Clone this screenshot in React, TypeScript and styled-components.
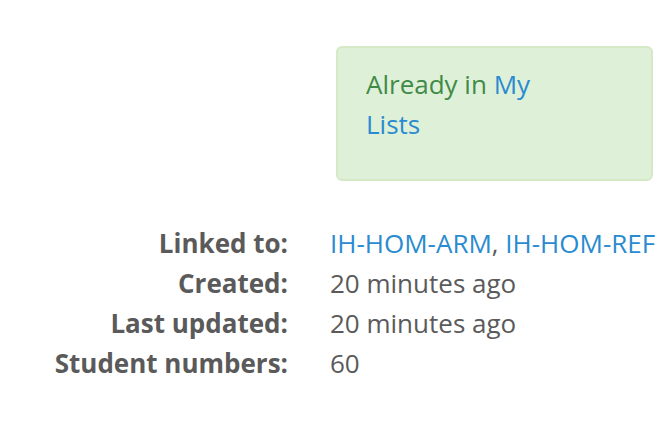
import styled, { createGlobalStyle } from 'styled-components';

const GlobalStyle = createGlobalStyle`
  html, body {
    margin: 0;
    padding: 0;
    background: #ffffff;
  }
  body {
    font-family: 'Open Sans', 'Noto Sans', sans-serif;
    font-size: 26px;
    color: #555555;
  }
`;

const details = [
  { label: 'Linked to:', links: ['IH-HOM-ARM', 'IH-HOM-REF'] },
  { label: 'Created:', value: '20 minutes ago' },
  { label: 'Last updated:', value: '20 minutes ago' },
  { label: 'Student numbers:', value: '60' },
];

const App = () => {
  return (
    <Styled.Page>
      <GlobalStyle />
      <Styled.AlertRow>
        <Styled.Alert>
          <Styled.AlertText>
            Already in <Styled.Link href="#">My Lists</Styled.Link>
          </Styled.AlertText>
        </Styled.Alert>
      </Styled.AlertRow>
      <Styled.Details>
        {details.map((d) => (
          <Styled.Row key={d.label}>
            <Styled.Term>{d.label}</Styled.Term>
            <Styled.Value>
              {d.links
                ? d.links.map((l, i) => (
                    <span key={l}>
                      {i > 0 && ', '}
                      <Styled.Link href="#">{l}</Styled.Link>
                    </span>
                  ))
                : d.value}
            </Styled.Value>
          </Styled.Row>
        ))}
      </Styled.Details>
    </Styled.Page>
  );
};

export default App;

const Styled = {
  Page: styled.div`
    width: 662px;
    height: 424px;
    overflow: hidden;
    padding-top: 46px;
    box-sizing: border-box;
  `,
  AlertRow: styled.div`
    display: flex;
    justify-content: flex-end;
    padding-right: 9px;
  `,
  Alert: styled.div`
    width: 317px;
    box-sizing: border-box;
    background: #dff0d8;
    border: 2px solid #d6e9c6;
    border-radius: 6px;
    padding: 16px 28px 35px;
    color: #3f8a48;
    line-height: 40px;
  `,
  AlertText: styled.div`
    max-width: 205px;
  `,
  Link: styled.a`
    color: #2a8bd0;
    text-decoration: none;
  `,
  Details: styled.dl`
    margin: 42px 0 0;
    display: grid;
    grid-template-columns: 288px auto;
    column-gap: 42px;
    line-height: 40px;
  `,
  Row: styled.div`
    display: contents;
  `,
  Term: styled.dt`
    text-align: right;
    font-weight: 700;
    color: #5a5a5a;
    white-space: nowrap;
  `,
  Value: styled.dd`
    margin: 0;
    color: #5a5a5a;
    white-space: nowrap;
  `,
};
